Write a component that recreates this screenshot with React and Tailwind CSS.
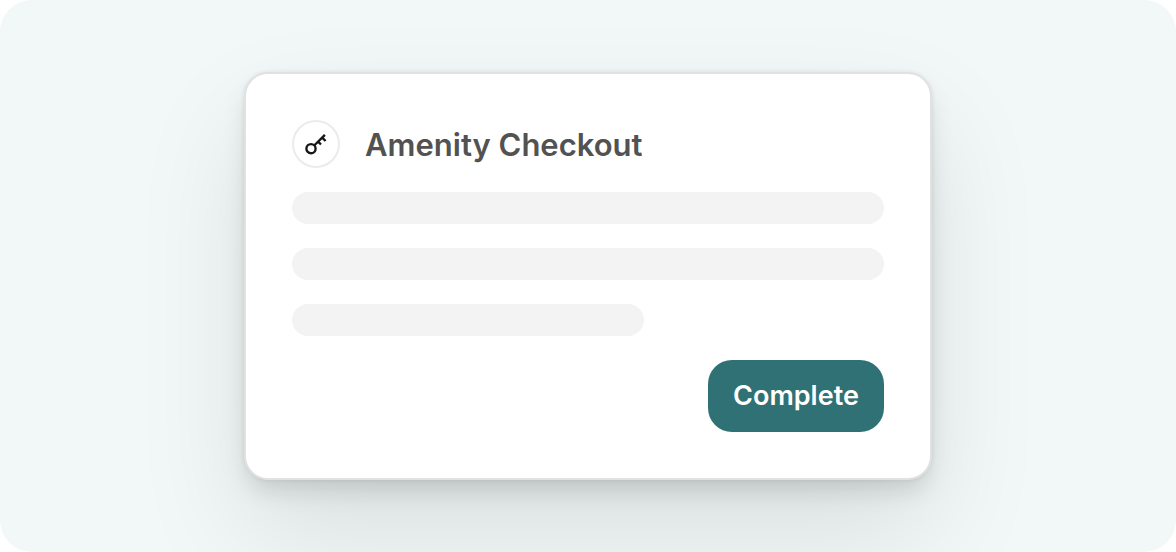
const skeletonRows = ['w-full', 'w-full', 'w-[352px] max-w-full'];

function KeyIcon() {
  return (
    <svg width="24" height="24" viewBox="0 0 24 24" fill="none" stroke="currentColor" strokeWidth="2.4" aria-hidden="true">
      <circle cx="7" cy="16.7" r="4.6" />
      <path d="M10.2 13.5 20.9 2.9M18.2 5.6l3.4 3.4M14.1 9.6l2.9 2.9" />
    </svg>
  );
}

export default function App() {
  return (
    <main className="min-h-screen flex items-center justify-center overflow-hidden rounded-[32px] bg-[#f1f8f7] px-6 py-[72px] font-['Inter',sans-serif]">
      <section className="flex w-full max-w-[688px] flex-col gap-6 rounded-3xl border-2 border-[#e1e1e1] bg-white p-[46px] shadow-[0_0_4px_rgba(0,0,0,0.08),0_14px_24px_-4px_rgba(0,0,0,0.13),0_52px_112px_rgba(0,0,0,0.10)]">
        <header className="flex items-center gap-[25px]">
          <div className="flex size-12 shrink-0 items-center justify-center rounded-full border-2 border-[#ebebeb] text-[#171717]">
            <KeyIcon />
          </div>
          <h1 className="pt-0.5 text-[31px] leading-11 font-semibold text-[#525252]">Amenity Checkout</h1>
        </header>

        {skeletonRows.map((width, i) => (
          <div key={i} className={`h-8 rounded-2xl bg-[#f3f3f3] ${width}`} />
        ))}

        <button type="button" className="min-w-44 self-end rounded-3xl bg-[#2f7174] px-6 py-4 text-[27px] leading-10 font-semibold text-white hover:bg-[#286164] transition-colors">
          Complete
        </button>
      </section>
    </main>
  );
}
